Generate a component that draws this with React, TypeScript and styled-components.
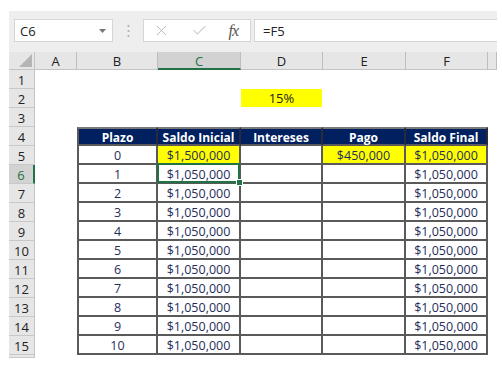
import React from 'react'
import styled, { createGlobalStyle, css } from 'styled-components'
import { X, Check } from 'lucide-react'

const GlobalStyle = createGlobalStyle`
  body {
    margin: 0;
    background: #ffffff;
    font-family: "Open Sans", "Liberation Sans", sans-serif;
  }
`

const green = '#217346'
const navy = '#002060'
const line = '#5a5a5a'

const Window = styled.div`
  width: 488px;
  margin: 11px 0 0 9px;
`

const Toolbar = styled.div`
  height: 41px;
  box-sizing: border-box;
  background: #eeeeee;
  display: flex;
  align-items: flex-start;
  padding: 8px 0 0 5px;
`

const NameBox = styled.div`
  width: 99px;
  height: 23px;
  box-sizing: border-box;
  background: #fff;
  border: 1px solid #d6d6d6;
  display: flex;
  align-items: center;
  justify-content: space-between;
  padding: 0 6px 0 5px;
  font-size: 13px;
  color: #222;
`

const Dots = styled.div`
  width: 30px;
  height: 23px;
  display: flex;
  align-items: center;
  justify-content: center;
`

const ButtonBox = styled.div`
  width: 108px;
  height: 23px;
  box-sizing: border-box;
  background: #fff;
  border: 1px solid #d6d6d6;
  display: flex;
  align-items: center;
  justify-content: space-between;
  padding: 0 12px 0 9px;
`

const Fx = styled.span`
  font-family: "Liberation Serif", "DejaVu Serif", serif;
  font-style: italic;
  font-size: 16px;
  color: #555;
  letter-spacing: -1px;
`

const FormulaBox = styled.div`
  flex: 1;
  margin-left: 3px;
  height: 23px;
  box-sizing: border-box;
  background: #fff;
  border: 1px solid #d6d6d6;
  border-right: none;
  display: flex;
  align-items: center;
  padding-left: 8px;
  font-size: 13px;
  color: #222;
`

const Sheet = styled.div`
  display: grid;
  grid-template-columns: 26px 42px 81px 83px 82px 83px 82px 9px;
  grid-template-rows: 18px repeat(15, 19px) 3px;
  font-size: 13px;
`

const Corner = styled.div`
  background: #e6e6e6;
  border-right: 1px solid #c4c4c4;
  border-bottom: 1px solid #c4c4c4;
  box-sizing: border-box;
  display: flex;
  align-items: flex-end;
  justify-content: flex-end;
  padding: 0 2px 2px 0;
`

const ColHead = styled.div<{ $active?: boolean }>`
  background: ${p => (p.$active ? '#d2d2d2' : '#e6e6e6')};
  color: ${p => (p.$active ? green : '#222')};
  border-right: 1px solid #bdbdbd;
  border-bottom: ${p => (p.$active ? `2px solid ${green}` : '1px solid #c4c4c4')};
  box-sizing: border-box;
  display: flex;
  align-items: center;
  justify-content: center;
  padding-top: 1px;
`

const RowHead = styled.div<{ $active?: boolean }>`
  background: ${p => (p.$active ? '#d2d2d2' : '#e6e6e6')};
  color: ${p => (p.$active ? green : '#222')};
  border-right: ${p => (p.$active ? `2px solid ${green}` : '1px solid #c4c4c4')};
  border-bottom: 1px solid #c8c8c8;
  box-sizing: border-box;
  display: flex;
  align-items: center;
  justify-content: center;
  padding-top: 1px;
`

const Blank = styled.div<{ $fill?: boolean }>`
  background: ${p => (p.$fill ? '#ffff00' : '#fff')};
  color: #222;
  display: flex;
  align-items: center;
  justify-content: center;
  margin: ${p => (p.$fill ? '0 1px 1px 0' : '0')};
`

const TCell = styled.div<{ $head?: boolean; $fill?: boolean; $first?: boolean; $selected?: boolean }>`
  position: relative;
  box-sizing: border-box;
  display: flex;
  align-items: center;
  justify-content: center;
  padding-top: 1px;
  background: ${p => (p.$head ? navy : p.$fill ? '#ffff00' : '#fff')};
  color: ${p => (p.$head ? '#fff' : '#1f2d5a')};
  font-weight: ${p => (p.$head ? 700 : 400)};
  font-size: ${p => (p.$head ? '12px' : '12.5px')};
  border-right: 2px solid ${line};
  border-bottom: 2px solid ${line};
  ${p => p.$first && css`border-left: 2px solid ${line};`}
  ${p => p.$head && css`border-top: 2px solid #7a7a7a; border-right-color: #2a2a3a;`}
  ${p =>
    p.$selected &&
    css`
      &::after {
        content: '';
        position: absolute;
        left: -1px;
        top: -2px;
        right: -1px;
        bottom: -1px;
        border: 2px solid ${green};
      }
      &::before {
        content: '';
        position: absolute;
        right: -4px;
        bottom: -4px;
        width: 5px;
        height: 5px;
        background: ${green};
        border: 1px solid #fff;
        z-index: 2;
      }
    `}
`

const columns = ['A', 'B', 'C', 'D', 'E', 'F']

const tableHead = ['Plazo', 'Saldo Inicial', 'Intereses', 'Pago', 'Saldo Final']

const tableRows = Array.from({ length: 11 }, (_, i) =>
  i === 0
    ? ['0', '$1,500,000', '', '$450,000', '$1,050,000']
    : [String(i), '$1,050,000', '', '', '$1,050,000']
)

const yellowFirst = [false, true, false, true, true]

const App: React.FC = () => {
  const renderRow = (r: number) => {
    const cells: React.ReactNode[] = []
    cells.push(
      <RowHead key={`h${r}`} $active={r === 6}>
        {r}
      </RowHead>
    )
    cells.push(<Blank key={`a${r}`} />)
    for (let c = 0; c < 5; c++) {
      const key = `${r}-${c}`
      if (r === 4) {
        cells.push(
          <TCell key={key} $head $first={c === 0}>
            {tableHead[c]}
          </TCell>
        )
      } else if (r >= 5) {
        const data = tableRows[r - 5]
        cells.push(
          <TCell key={key} $first={c === 0} $fill={r === 5 && yellowFirst[c]} $selected={r === 6 && c === 1}>
            {data[c]}
          </TCell>
        )
      } else if (r === 2 && c === 2) {
        cells.push(
          <Blank key={key} $fill>
            15%
          </Blank>
        )
      } else {
        cells.push(<Blank key={key} />)
      }
    }
    cells.push(<Blank key={`g${r}`} />)
    return cells
  }

  return (
    <>
      <GlobalStyle />
      <Window>
        <Toolbar>
          <NameBox>
            <span>C6</span>
            <svg width="7" height="4" viewBox="0 0 7 4">
              <polygon points="0,0 7,0 3.5,4" fill="#777" />
            </svg>
          </NameBox>
          <Dots>
            <svg width="3" height="14" viewBox="0 0 3 14">
              <circle cx="1.5" cy="2" r="1.1" fill="#b0b0b0" />
              <circle cx="1.5" cy="7" r="1.1" fill="#b0b0b0" />
              <circle cx="1.5" cy="12" r="1.1" fill="#b0b0b0" />
            </svg>
          </Dots>
          <ButtonBox>
            <X size={17} strokeWidth={1.1} color="#a8a8a8" />
            <Check size={17} strokeWidth={1.3} color="#a8a8a8" />
            <Fx>fx</Fx>
          </ButtonBox>
          <FormulaBox>=F5</FormulaBox>
        </Toolbar>
        <Sheet>
          <Corner>
            <svg width="13" height="13" viewBox="0 0 13 13">
              <polygon points="13,0 13,13 0,13" fill="#b5b5b5" />
            </svg>
          </Corner>
          {columns.map(col => (
            <ColHead key={col} $active={col === 'C'}>
              {col}
            </ColHead>
          ))}
          <ColHead />
          {Array.from({ length: 15 }, (_, i) => renderRow(i + 1))}
          <RowHead />
          {Array.from({ length: 7 }, (_, i) => (
            <Blank key={`end${i}`} />
          ))}
        </Sheet>
      </Window>
    </>
  )
}

export default App
